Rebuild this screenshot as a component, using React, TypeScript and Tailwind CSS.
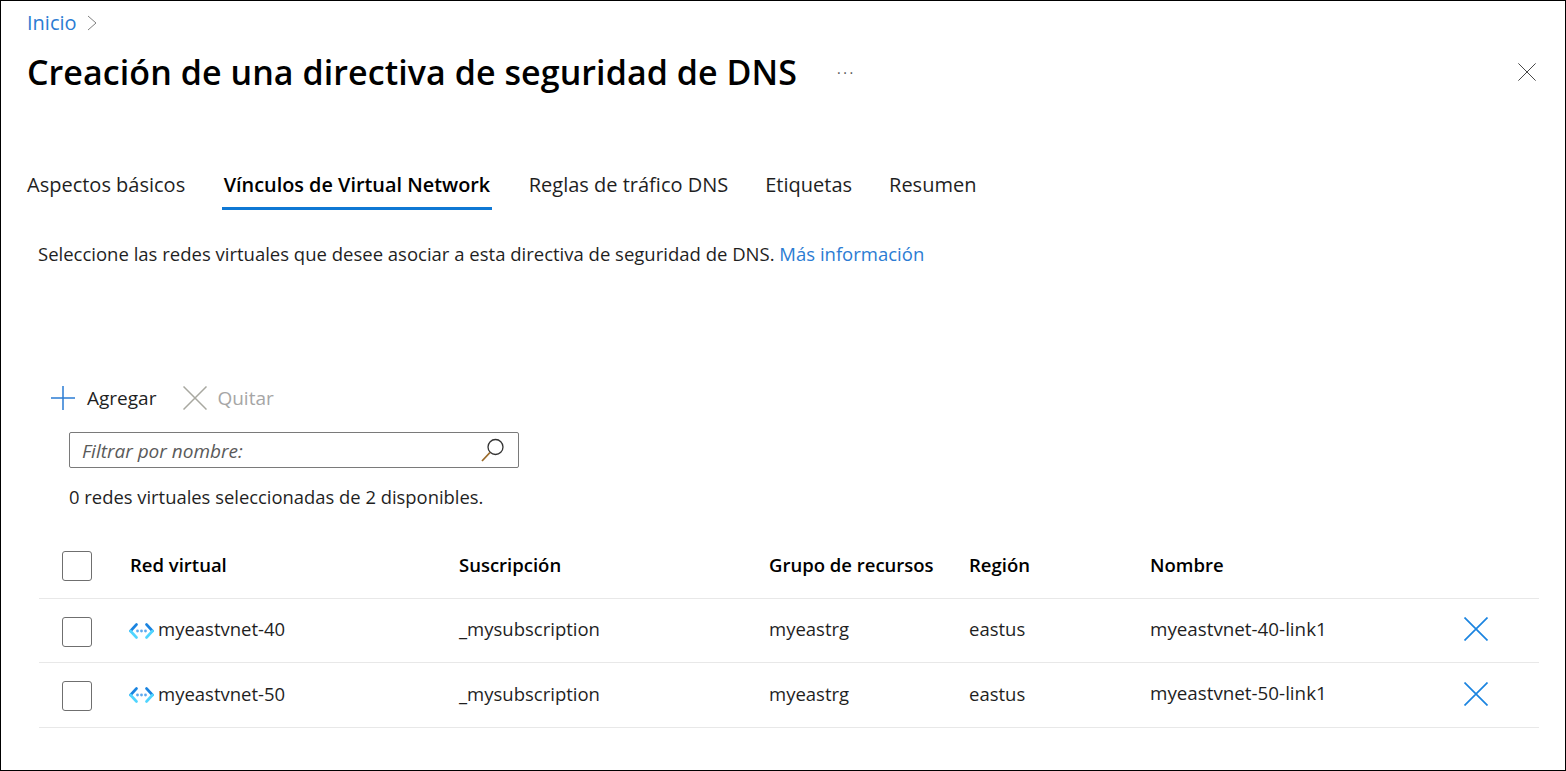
const tabs = ["Aspectos básicos", "Vínculos de Virtual Network", "Reglas de tráfico DNS", "Etiquetas", "Resumen"];

const rows = [
  { name: "myeastvnet-40", link: "myeastvnet-40-link1", height: "h-[64px]" },
  { name: "myeastvnet-50", link: "myeastvnet-50-link1", height: "h-[65px]" },
];

const gridCols = "grid grid-cols-[23px_68px_329px_310px_200px_181px_314px_1fr] items-center";

function Cross({ size, color, width = 1.4 }: { size: number; color: string; width?: number }) {
  return (
    <svg width={size} height={size} viewBox="0 0 24 24" fill="none">
      <path d="M0.5 0.5 23.5 23.5M23.5 0.5 0.5 23.5" stroke={color} strokeWidth={width} />
    </svg>
  );
}

function VnetIcon() {
  return (
    <svg width="25" height="16" viewBox="0 0 25 16" fill="none" className="mt-[3px] shrink-0">
      <path d="M1.500 8 7.500 1.500M23.500 8 17.500 1.500" stroke="#1b84e0" strokeWidth="2.600" strokeLinecap="round" />
      <path d="M1.500 8 7.500 14.500M23.500 8 17.500 14.500" stroke="#50d5ff" strokeWidth="2.600" strokeLinecap="round" />
      <circle cx="8.500" cy="8" r="1.400" fill="#5ea9ef" />
      <circle cx="12.500" cy="8" r="1.400" fill="#5ea9ef" />
      <circle cx="16.500" cy="8" r="1.400" fill="#5ea9ef" />
    </svg>
  );
}

function Check({ className = "" }: { className?: string }) {
  return <div className={`h-[30px] w-[30px] rounded-[3px] border border-[#6f6f6f] bg-white ${className}`} />;
}

export default function App() {
  return (
    <div className="flex h-[771px] w-[1566px] flex-col overflow-hidden border border-black bg-white font-['Open_Sans','Noto_Sans',sans-serif] text-[18.5px] text-[#1f1f1f]">
      <div className="mt-[11px] flex h-[21px] items-center gap-[10px] pl-[26px]">
        <span className="text-[20px] text-[#2b7cd3]">Inicio</span>
        <svg width="10" height="16" viewBox="0 0 10 16" fill="none">
          <path d="M1 1l8 7-8 7" stroke="#808080" strokeWidth="1" />
        </svg>
      </div>

      <div className="mt-[16px] flex h-[46px] items-center pl-[26px] pr-[29px]">
        <h1 className="whitespace-nowrap text-[34px] font-semibold tracking-[0.07px] text-black">
          Creación de una directiva de seguridad de DNS
        </h1>
        <span className="mb-[6px] ml-[40px] text-[14px] leading-none tracking-[2.5px] text-[#555]">...</span>
        <button className="ml-auto">
          <Cross size={18} color="#333" width={1.2} />
        </button>
      </div>

      <div className="mt-[68px] flex h-[47px] gap-[37px] pl-[26px] text-[20px]">
        {tabs.map((tab, i) => (
          <div
            key={tab}
            className={`flex items-center whitespace-nowrap border-b-[3px] ${
              i === 1 ? "border-[#0f78d4] px-[1.500px] text-[19.850px] font-semibold text-black" : "border-transparent"
            }`}
          >
            {tab}
          </div>
        ))}
      </div>

      <p className="mt-[32px] h-[24px] pl-[37px] leading-[24px]">
        Seleccione las redes virtuales que desee asociar a esta directiva de seguridad de DNS.{" "}
        <span className="text-[#2b7cd3]">Más información</span>
      </p>

      <div className="mt-[117px] flex h-[30px] items-center pl-[49px] text-[19px]">
        <svg width="26" height="26" viewBox="0 0 26 26" fill="none">
          <path d="M13 1v24M1 13h24" stroke="#2b7cd3" strokeWidth="1.500" />
        </svg>
        <span className="ml-[11px]">Agregar</span>
        <span className="ml-[27px]">
          <Cross size={24} color="#a8a8a0" width={1.5} />
        </span>
        <span className="ml-[10px] text-[#a6a6a6]">Quitar</span>
      </div>

      <div className="ml-[68px] mt-[19px] flex h-[36px] w-[450px] items-center rounded-[2px] border border-[#7a7a7a] px-[12px] text-[19px]">
        <span className="pt-[2px] italic text-[#5a5a5a]">Filtrar por nombre:</span>
        <svg width="26" height="26" viewBox="0 0 26 26" fill="none" className="ml-auto">
          <circle cx="15.500" cy="10" r="7.500" stroke="#333" strokeWidth="1.300" />
          <path d="M10 15.500 2 24" stroke="#9a6a2a" strokeWidth="1.800" />
        </svg>
      </div>

      <p className="ml-[68px] mt-[17px] h-[24px] text-[18.400px] leading-[24px]">
        0 redes virtuales seleccionadas de 2 disponibles.
      </p>

      <div className="ml-[38px] mt-[30px] w-[1500px]">
        <div className={`${gridCols} h-[60px] border-b border-[#e8e8e8] pb-[6px] font-semibold text-black`}>
          <span />
          <Check />
          <span className="pb-[2px]">Red virtual</span>
          <span className="pb-[2px]">Suscripción</span>
          <span className="pb-[2px]">Grupo de recursos</span>
          <span className="pb-[2px]">Región</span>
          <span className="pb-[2px]">Nombre</span>
          <span />
        </div>
        {rows.map((row) => (
          <div key={row.name} className={`${gridCols} ${row.height} border-b border-[#e8e8e8]`}>
            <span />
            <Check className="mt-[2px]" />
            <span className="-ml-[1px] flex items-center gap-[4px] pb-[3px]">
              <VnetIcon />
              {row.name}
            </span>
            <span className="pb-[3px]">_mysubscription</span>
            <span className="pb-[3px]">myeastrg</span>
            <span className="pb-[3px]">eastus</span>
            <span className="pb-[3px] text-[18.800px]">{row.link}</span>
            <span className="pb-[3px]">
              <Cross size={24} color="#1b84e0" width={1.7} />
            </span>
          </div>
        ))}
      </div>
    </div>
  );
}
